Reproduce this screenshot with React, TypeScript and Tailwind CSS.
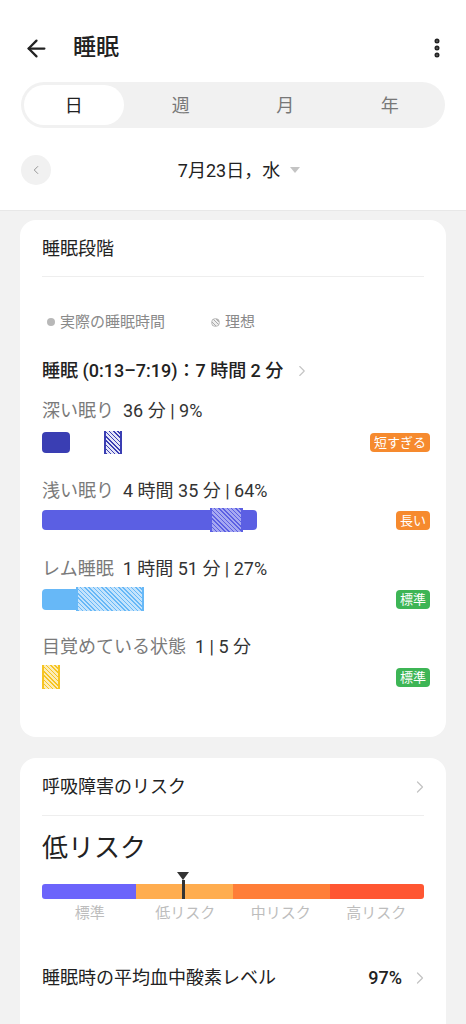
import { ArrowLeft, ChevronLeft, ChevronRight, EllipsisVertical } from "lucide-react";

const font = "font-['Roboto','Noto_Sans_CJK_JP',sans-serif]";

function Badge({ label, tone }: { label: string; tone: "orange" | "green" }) {
  return (
    <div className="ml-auto mr-[-6px] flex">
      <span
        className={`whitespace-nowrap rounded-[4px] px-[4px] text-[13px] leading-[19px] text-white ${
          tone === "orange" ? "bg-[#f68a2e]" : "bg-[#3db555]"
        }`}
      >
        {label}
      </span>
    </div>
  );
}

function StageHeading({ label, value }: { label: string; value: string }) {
  return (
    <p className="text-[18px] leading-[26px]">
      <span className="text-[#7a7a7a]">{label}</span>
      <span className="ml-[9px] text-[#333]">{value}</span>
    </p>
  );
}

export default function App() {
  return (
    <div className={`${font} min-h-[1024px] w-[466px] bg-[#f2f2f2] text-[#222]`}>
      <header className="border-b border-[#e8e8e8] bg-white px-[21px] pb-[25px] pt-[28px]">
        <div className="flex h-[40px] items-center">
          <ArrowLeft size={27} strokeWidth={2} className="ml-[2px] text-[#222]" />
          <h1 className="ml-[23px] text-[23px] font-medium">睡眠</h1>
          <EllipsisVertical size={24} strokeWidth={3} className="ml-auto mr-[-4px] text-[#222]" />
        </div>
        <div className="mt-[14px] grid h-[46px] grid-cols-4 rounded-full bg-[#f1f1f1] p-[3px] text-[18px]">
          <div className="mr-[5px] flex items-center justify-center rounded-full bg-white text-[#222]">日</div>
          <div className="flex items-center justify-center text-[#777]">週</div>
          <div className="flex items-center justify-center text-[#777]">月</div>
          <div className="flex items-center justify-center text-[#777]">年</div>
        </div>
        <div className="mt-[27px] flex h-[30px] items-center">
          <div className="flex h-[30px] w-[30px] items-center justify-center rounded-full bg-[#f1f1f1]">
            <ChevronLeft size={14} strokeWidth={1.5} className="text-[#888]" />
          </div>
          <div className="flex flex-1 items-center justify-center pr-[18px] text-[18px] text-[#222]">
            7月23日，水
            <span className="ml-[10px] h-0 w-0 border-x-[5px] border-t-[6px] border-x-transparent border-t-[#c4c4c4]" />
          </div>
        </div>
      </header>

      <section className="mx-[20px] mt-[9px] rounded-[16px] bg-white px-[22px] pb-[48px] pt-[16px]">
        <h2 className="text-[18px] leading-[26px]">睡眠段階</h2>
        <div className="mt-[14px] border-t border-[#eeeeee]" />
        <div className="mt-[35px] flex items-center text-[15px] leading-[20px] text-[#8a8a8a]">
          <span className="ml-[5px] h-[8px] w-[8px] rounded-full bg-[#b8b8b8]" />
          <span className="ml-[5px]">実際の睡眠時間</span>
          <span className="ml-[46px] h-[9px] w-[9px] rounded-full border border-[#bbb] bg-[repeating-linear-gradient(45deg,#aaa_0_1px,#eee_1px_2.5px)]" />
          <span className="ml-[5px]">理想</span>
        </div>
        <div className="mt-[26px] flex items-center text-[18px] font-medium leading-[26px] text-[#222]">
          睡眠 (0:13–7:19)：7 時間 2 分
          <ChevronRight size={18} strokeWidth={1.5} className="ml-[10px] text-[#c4c4c4]" />
        </div>

        <div className="mt-[14px]">
          <StageHeading label="深い眠り" value="36 分 | 9%" />
          <div className="mt-[6px] flex h-[24px] items-center">
            <div className="h-[21px] w-[28px] rounded-[4px] bg-[#3a3eb3]" />
            <div className="ml-[34px] h-[23px] w-[18px] border-x-2 border-[#3a3eb3] bg-[repeating-linear-gradient(45deg,#3a3eb3_0_1px,#e4e5f7_1px_3px)]" />
            <Badge label="短すぎる" tone="orange" />
          </div>
        </div>

        <div className="mt-[24px]">
          <StageHeading label="浅い眠り" value="4 時間 35 分 | 64%" />
          <div className="mt-[4px] flex h-[24px] items-center">
            <div className="h-[20px] w-[168px] rounded-l-[4px] bg-[#5b5fe3]" />
            <div className="h-[24px] w-[33px] border-x-2 border-[#5b5fe3] bg-[repeating-linear-gradient(45deg,#5b5fe3_0_1px,#a6a8f1_1px_3px)]" />
            <div className="h-[20px] w-[14px] rounded-r-[4px] bg-[#5b5fe3]" />
            <Badge label="長い" tone="orange" />
          </div>
        </div>

        <div className="mt-[24px]">
          <StageHeading label="レム睡眠" value="1 時間 51 分 | 27%" />
          <div className="mt-[5px] flex h-[24px] items-center">
            <div className="h-[21px] w-[34px] rounded-l-[4px] bg-[#67b8f7]" />
            <div className="h-[24px] w-[68px] border-x-2 border-[#67b8f7] bg-[repeating-linear-gradient(45deg,#67b8f7_0_1px,#c4e3fc_1px_3px)]" />
            <Badge label="標準" tone="green" />
          </div>
        </div>

        <div className="mt-[23px]">
          <StageHeading label="目覚めている状態" value="1 | 5 分" />
          <div className="mt-[5px] flex h-[24px] items-center">
            <div className="h-[24px] w-[18px] border-x-2 border-[#f6c423] bg-[repeating-linear-gradient(45deg,#f6c423_0_1px,#fcecb8_1px_3px)]" />
            <Badge label="標準" tone="green" />
          </div>
        </div>
      </section>

      <section className="mx-[20px] mt-[21px] rounded-t-[16px] bg-white px-[22px] pb-[40px] pt-[16px]">
        <div className="flex items-center text-[18px] leading-[26px]">
          呼吸障害のリスク
          <ChevronRight size={20} strokeWidth={1.5} className="ml-auto mr-[-6px] text-[#c4c4c4]" />
        </div>
        <div className="mt-[15px] border-t border-[#eeeeee]" />
        <p className="mt-[15px] text-[26px] leading-[34px] text-[#222]">低リスク</p>
        <div className="relative mt-[19px]">
          <div className="flex h-[15px] overflow-hidden rounded-[3px]">
            <div className="w-[94px] bg-[#6c64fb]" />
            <div className="w-[97px] bg-[#ffad4f]" />
            <div className="w-[97px] bg-[#ff7e38]" />
            <div className="flex-1 bg-[#ff5632]" />
          </div>
          <div className="absolute left-[135px] top-[-12px] flex flex-col items-center">
            <span className="h-0 w-0 border-x-[6px] border-t-[8px] border-x-transparent border-t-[#333]" />
            <span className="h-[19px] w-[3px] bg-[#333]" />
          </div>
        </div>
        <div className="mt-[4px] grid grid-cols-4 text-center text-[15px] leading-[20px] text-[#bdbdbd]">
          <span>標準</span>
          <span>低リスク</span>
          <span>中リスク</span>
          <span>高リスク</span>
        </div>
        <div className="mt-[42px] flex items-center text-[18px] leading-[26px]">
          睡眠時の平均血中酸素レベル
          <span className="ml-auto font-medium">97%</span>
          <ChevronRight size={20} strokeWidth={1.5} className="ml-[8px] mr-[-6px] text-[#c4c4c4]" />
        </div>
      </section>
    </div>
  );
}
